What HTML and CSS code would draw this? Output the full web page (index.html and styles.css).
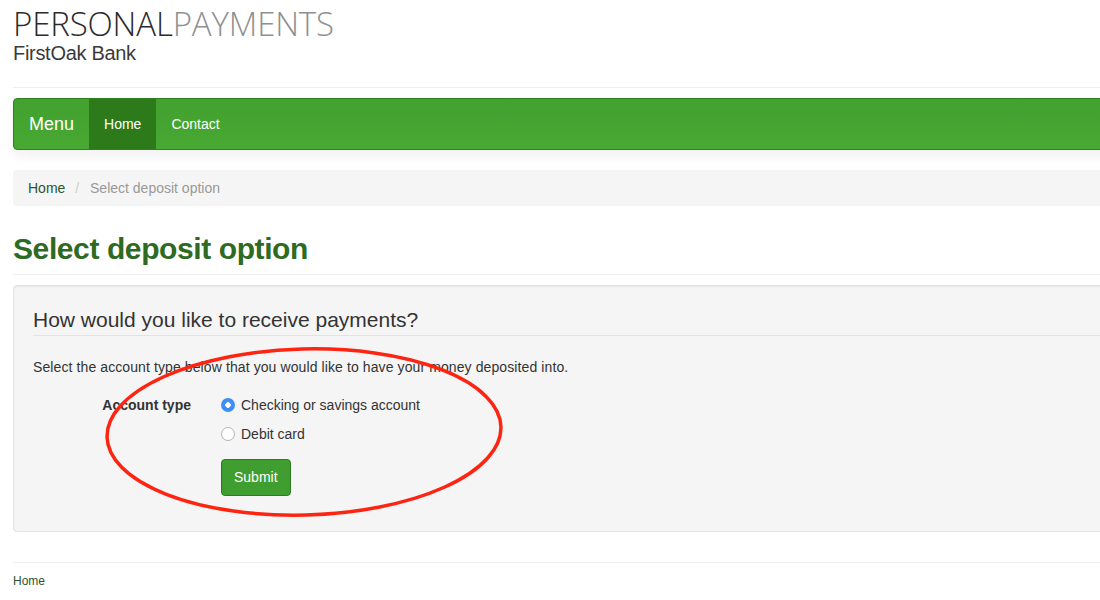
FILE: index.html
```html
<!DOCTYPE html>
<html lang="en">
<head>
  <meta charset="UTF-8">
  <title>Select deposit option</title>
  <link rel="stylesheet" href="styles.css">
</head>
<body>
<div class="container">
  <div class="brand-head">
    <div class="brand-title"><span class="dark">PERSONAL</span><span class="light">PAYMENTS</span></div>
    <div class="brand-sub">FirstOak Bank</div>
  </div>
  <hr class="rule">

  <div class="navbar">
    <a class="nav-brand" href="#">Menu</a>
    <a class="nav-link active" href="#">Home</a>
    <a class="nav-link" href="#">Contact</a>
  </div>

  <div class="crumbs">
    <a href="#">Home</a>
    <span class="sep">/</span>
    <span class="current">Select deposit option</span>
  </div>

  <h1 class="page-title">Select deposit option</h1>
  <hr class="rule">

  <div class="well">
    <div class="legend">How would you like to receive payments?</div>
    <p class="intro">Select the account type below that you would like to have your money deposited into.</p>
    <div class="form-row">
      <div class="form-label">Account type</div>
      <div class="form-controls">
        <label class="radio"><span class="dot checked"></span>Checking or savings account</label>
        <label class="radio"><span class="dot"></span>Debit card</label>
        <button class="btn-submit" type="button">Submit</button>
      </div>
    </div>
  </div>

  <hr class="rule footer-rule">
  <div class="footer"><a href="#">Home</a></div>

  <!-- hand drawn annotation on top of the form -->
  <svg class="mark" width="440" height="200" viewBox="0 0 440 200">
    <ellipse cx="220" cy="100" rx="197" ry="83" fill="none" stroke="#fe2412" stroke-width="3.5" transform="rotate(-1.5 220 100)"/>
  </svg>
</div>
</body>
</html>
```

FILE: styles.css
```css
* {
  box-sizing: border-box;
}
html, body {
  margin: 0;
  padding: 0;
  overflow: hidden;
}
body {
  background: #fff;
  font-family: "Liberation Sans", Arial, sans-serif;
  font-size: 14px;
  line-height: 20px;
  color: #333;
}
a {
  text-decoration: none;
}

.container {
  position: relative;
  width: 1160px;
  margin-left: 13px;
}

.brand-head {
  padding-top: 6px;
}
.brand-title {
  font-family: "Open Sans", sans-serif;
  font-weight: 300;
  font-size: 33px;
  line-height: 35px;
  letter-spacing: -0.15px;
}
.brand-title .dark {
  color: #2b2b2b;
}
.brand-title .light {
  color: #909090;
}
.brand-sub {
  margin-top: 1px;
  font-size: 20px;
  line-height: 22px;
  color: #3a3a3a;
  letter-spacing: -0.3px;
}

.rule {
  border: 0;
  border-top: 1px solid #eee;
  margin: 23px 0 10px;
}

/* green menu bar */
.navbar {
  display: flex;
  height: 52px;
  background: linear-gradient(#43a12f, #47a832);
  border: 1px solid #2f8021;
  border-radius: 4px;
  box-shadow: 0 6px 12px rgba(0, 0, 0, 0.06);
  margin-bottom: 20px;
  overflow: hidden;
}
.nav-brand {
  color: #fff;
  font-size: 18px;
  padding: 15px 15px;
  line-height: 20px;
}
.nav-link {
  color: #fff;
  padding: 15px 15px;
  line-height: 20px;
}
.nav-link.active {
  background: #2c7a1a;
}

.crumbs {
  background: #f5f5f5;
  border-radius: 4px;
  padding: 8px 15px;
  margin-bottom: 20px;
}
.crumbs a {
  color: #2a5531;
}
.crumbs .sep {
  color: #ccc;
  padding: 0 7px 0 6px;
}
.crumbs .current {
  color: #999;
}

.page-title {
  margin: 26px 0 0;
  font-size: 30px;
  line-height: 33px;
  letter-spacing: -0.4px;
  color: #2e6a22;
}
.page-title + .rule {
  margin: 9px 0 10px;
}

.well {
  background: #f5f5f5;
  border: 1px solid #e3e3e3;
  border-radius: 4px;
  box-shadow: inset 0 1px 2px rgba(0, 0, 0, 0.06);
  padding: 19px;
}
.legend {
  font-size: 21px;
  line-height: 30px;
  padding-top: 0;
  color: #333;
  border-bottom: 1px solid #e3e3e3;
  margin-bottom: 21px;
}
.intro {
  margin: 0 0 18px;
  letter-spacing: 0.1px;
}

.form-row {
  display: grid;
  grid-template-columns: 173px 1fr;
  margin-bottom: 16px;
}
.form-label {
  text-align: right;
  padding-right: 15px;
  font-weight: bold;
  padding-top: 0;
  color: #333;
}
.form-controls {
  padding-left: 15px;
}
.radio {
  display: flex;
  align-items: center;
  height: 20px;
  margin-bottom: 9px;
  color: #333;
}
.dot {
  width: 14px;
  height: 14px;
  border-radius: 50%;
  border: 1px solid #b5b5b5;
  background: #fff;
  margin-right: 6px;
}
.dot.checked {
  border: 0;
  background: radial-gradient(circle, #fff 0 2.5px, #3c8ff5 3px);
}
.btn-submit {
  display: block;
  margin-top: 15px;
  font-family: inherit;
  font-size: 14px;
  line-height: 19px;
  color: #fff;
  background: #3f9e2f;
  border: 1px solid #2e7a22;
  border-radius: 4px;
  padding: 8px 12px;
}

.footer-rule {
  margin: 30px 0 0;
}
.footer {
  font-size: 12px;
  line-height: 14px;
  padding-top: 11px;
}
.footer a {
  color: #2a5531;
}

.mark {
  position: absolute;
  left: 71px;
  top: 332px;
}
```
